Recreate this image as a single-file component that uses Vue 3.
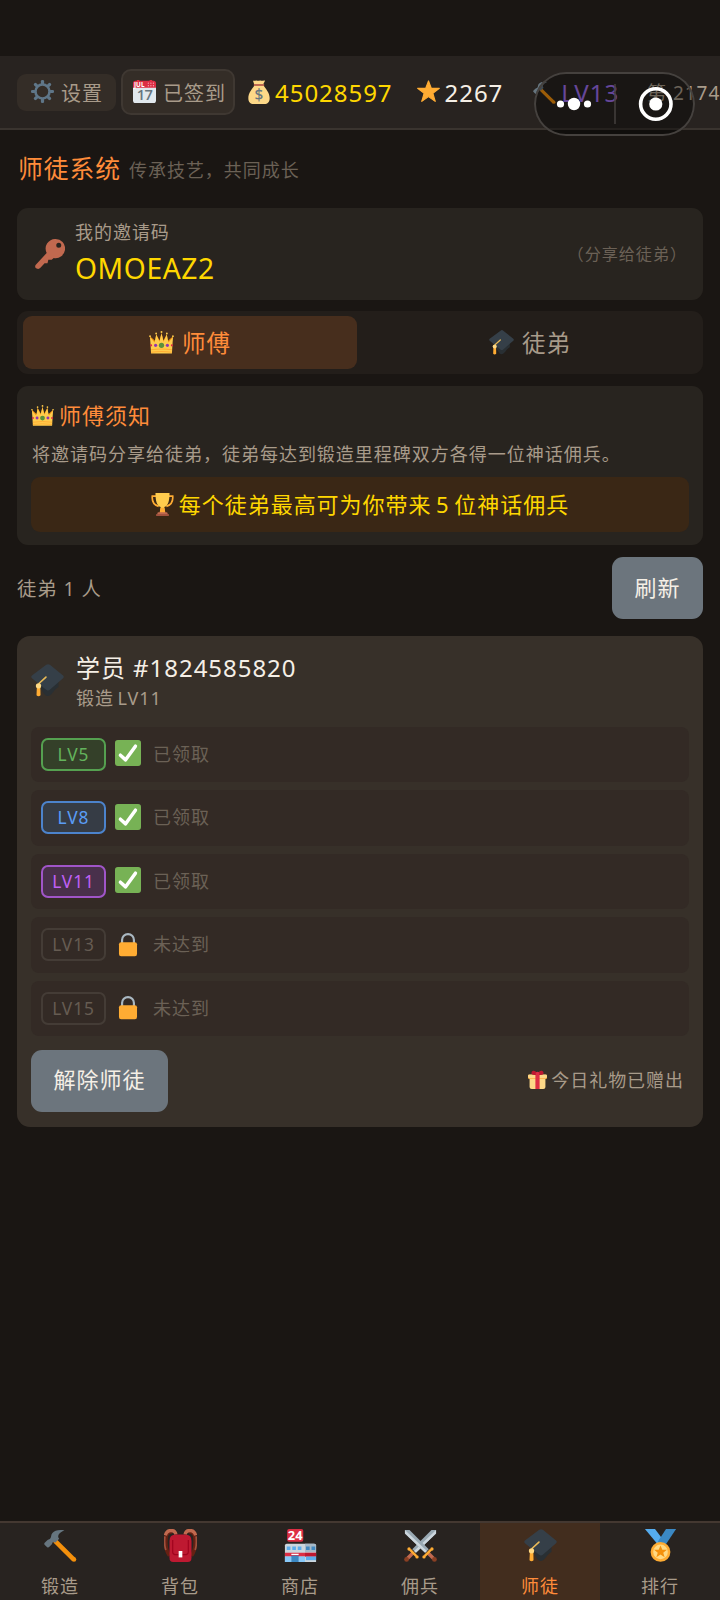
<script setup>
const levels = [
  { name: 'LV5', tone: 'green', done: true },
  { name: 'LV8', tone: 'blue', done: true },
  { name: 'LV11', tone: 'purple', done: true },
  { name: 'LV13', tone: 'locked', done: false },
  { name: 'LV15', tone: 'locked', done: false },
]
const nav = [
  { icon: 'hammer', label: '锻造' },
  { icon: 'bag', label: '背包' },
  { icon: 'store', label: '商店' },
  { icon: 'swords', label: '佣兵' },
  { icon: 'cap', label: '师徒', active: true },
  { icon: 'medal', label: '排行' },
]
const teeth = [0, 45, 90, 135, 180, 225, 270, 315]
</script>

<template>
  <div class="app">
    <svg class="defs" aria-hidden="true">
      <symbol id="gear" viewBox="0 0 36 36">
        <circle cx="18" cy="18" r="11" fill="none" stroke="#5f7688" stroke-width="4" />
        <rect v-for="a in teeth" :key="a" x="15.5" y="0" width="5" height="7" rx="2" fill="#5f7688" :transform="`rotate(${a} 18 18)`" />
      </symbol>
      <symbol id="calendar" viewBox="0 0 36 36">
        <path d="M0 10h36v22a4 4 0 0 1-4 4H4a4 4 0 0 1-4-4z" fill="#e1e8ed" />
        <path d="M0 12V5a4 4 0 0 1 4-4h2a2 2 0 0 1 4 0h16a2 2 0 0 1 4 0h2a4 4 0 0 1 4 4v7z" fill="#dd2e44" />
        <g fill="#f4abba"><circle cx="24" cy="5" r="1" /><circle cx="28" cy="5" r="1" /><circle cx="32" cy="5" r="1" /><circle cx="24" cy="9" r="1" /><circle cx="28" cy="9" r="1" /><circle cx="32" cy="9" r="1" /></g>
        <text x="1.5" y="11" class="cal-month">JUL</text>
        <text x="18" y="32" class="cal-day">17</text>
      </symbol>
      <symbol id="money" viewBox="0 0 36 36">
        <path d="M12 7C8 13 2 19 2 27c0 6 3 9 8 9h16c5 0 8-3 8-9 0-8-6-14-10-20z" fill="#fdd888" />
        <path d="M11 7 9 1c3 1 4-1 6 0s4-1 6 0 4-1 6 0l-3 6z" fill="#fdd888" />
        <rect x="10" y="6" width="16" height="3" rx="1.5" fill="#bf6952" />
        <text x="18" y="30" class="dollar">$</text>
      </symbol>
      <symbol id="star" viewBox="0 0 36 36">
        <path d="M18 1.5 22.3 13H35L24.8 20.7 28.5 33.5 18 26 7.5 33.5 11.2 20.7 1 13h12.7z" fill="#ffac33" stroke="#ffac33" stroke-width="1.8" stroke-linejoin="round" />
      </symbol>
      <symbol id="hammer" viewBox="0 0 36 36">
        <path d="M12 13 32.6 33.3" stroke="#f4900c" stroke-width="5" />
        <circle cx="32.7" cy="33.2" r="2.5" fill="#f4900c" />
        <path d="M22.3 1.4C16 .3 11.5 1.6 9.2 4.3c-2 2.4-.9 4.6-2.6 6.4-1 1-2 .7-3 1.6L.8 15c-.8.8-.6 1.7.1 2.4l2.3 2.2c.8.8 1.7.8 2.4.1l2.7-2.7c1-1 .5-1.8 1.3-2.6.8-.7 1.8-.1 2.6.7l4.4-4.4c-2.7-3.1-.2-6.8 5.7-9.3z" fill="#66757f" />
      </symbol>
      <symbol id="key" viewBox="0 0 36 36">
        <path fill-rule="evenodd" d="M24.5 0a11.5 11.5 0 1 1-2 22.8L20 25h-4l-1 4h-3.5l-5 5.5c-1 1.3-2.7 1.8-4.4 1C0 34.8-.4 32.3 1 30.8l13-14A11.5 11.5 0 0 1 24.5 0zm4 4.500a3 3 0 1 0 0 6 3 3 0 0 0 0-6z" fill="#c1694f" />
      </symbol>
      <symbol id="crown" viewBox="0 0 36 36">
        <path d="M3.5 21 1.500 9 9 16 10.300 6l5 9L18 4l2.700 11 5-9L27 16l7.500-7-2 12z" fill="#f4900c" />
        <path d="m3 34-1.500-24L8 18l2.500-11.500L15 17l3-12 3 12 4.500-10.500L28 18l6.500-8L33 34z" fill="#ffcc4d" />
        <g fill="#ffcc4d"><circle cx="1.500" cy="9" r="1.300" /><circle cx="10.300" cy="5" r="1.300" /><circle cx="18" cy="3" r="1.400" /><circle cx="25.700" cy="5" r="1.300" /><circle cx="34.500" cy="9" r="1.300" /></g>
        <path d="M3 28.500q15-2 30 0M3 32q15-2 30 0" stroke="#ffac33" stroke-width="1.500" fill="none" />
        <circle cx="18" cy="22" r="3.800" fill="#5c913b" /><circle cx="9.500" cy="22" r="2.300" fill="#9236b0" /><circle cx="26.500" cy="22" r="2.300" fill="#9236b0" /><circle cx="3" cy="22" r="1.600" fill="#dd2e44" /><circle cx="33" cy="22" r="1.600" fill="#dd2e44" />
      </symbol>
      <symbol id="trophy" viewBox="0 0 36 36">
        <path d="M9 5H2c-.8 9 3 14 10 16M27 5h7c.8 9-3 14-10 16" fill="none" stroke="#ffac33" stroke-width="2.600" />
        <path d="M7 0h22c0 12-2 20-8.200 22L22 31h-8l1.200-9C9 20 7 12 7 0z" fill="#ffcc4d" />
        <path d="M15 23h6l1.500 8h-9z" fill="#ffac33" />
        <path d="M10 36v-4q0-2 2-2h12q2 0 2 2v4z" fill="#c1694f" /><path d="M8 33h20v3H8z" fill="#a0513d" />
      </symbol>
      <symbol id="cap" viewBox="0 0 36 36">
        <path d="M8 17v7c4 2 6 11 10 11 5 0 7-8 12-10v-8z" fill="#292f33" />
        <path d="M20.600.9 35 12.500q1.500 1.500 0 3L20.500 28q-2 1.600-4 0L1 15.500q-1.500-1.500 0-3L16.600.9q2-1.500 4 0z" fill="#353f48" />
        <path d="M16.300 14.300 9 21v5" fill="none" stroke="#e9ba58" stroke-width="1.800" stroke-linecap="round" />
        <path d="M6 34.200 6.400 25h3.800l.2 9.200q-2.200 2-4.400 0z" fill="#ffac33" /><circle cx="8.200" cy="23.800" r="2.900" fill="#ffd983" />
      </symbol>
      <symbol id="check" viewBox="0 0 36 36">
        <rect width="36" height="36" rx="4" fill="#77b255" />
        <path d="m7.500 21 7.200 6.500L28.300 8.500" fill="none" stroke="#fff" stroke-width="4.800" stroke-linecap="round" stroke-linejoin="round" />
      </symbol>
      <symbol id="lock" viewBox="0 0 36 36">
        <path d="M9.800 19v-6.500a8.200 8.200 0 0 1 16.400 0V19" fill="none" stroke="#aab8c2" stroke-width="3" />
        <rect x="5.500" y="15.500" width="25" height="19.500" rx="3" fill="#ffac33" />
      </symbol>
      <symbol id="gift" viewBox="0 0 36 36">
        <path d="M3 12h30v20q0 4-4 4H7q-4 0-4-4z" fill="#fdd888" /><rect y="9" width="36" height="8" rx="2.500" fill="#fcab40" /><rect y="8.500" width="36" height="7" rx="2.500" fill="#fdd888" />
        <path d="M14 8h8v28h-8z" fill="#dd2e44" />
        <path d="M17 9C8 11 5 8 7 4s7-4 11 3c4-7 9-7 11-3s-1 7-10 5z" fill="#be1931" /><circle cx="18" cy="7" r="3.600" fill="#dd2e44" />
      </symbol>
      <symbol id="bag" viewBox="0 0 36 36">
        <path d="M9 3C2 3 2 8 2 15c0 6 1 10 4 14M27 3c7 0 7 5 7 12 0 6-1 10-4 14" fill="none" stroke="#662113" stroke-width="4" />
        <path d="M13 6C12 0 3 0 1.500 7M23 6c1-6 10-6 11.500 1" fill="none" stroke="#c1694f" stroke-width="3.600" /><path d="M1 8q-1 9 1 15M35 8q1 9-1 15" stroke="#a0513d" stroke-width="1.800" fill="none" />
        <path d="M6 13q0-7 7-7h10q7 0 7 7v18q0 5-4 5H10q-4 0-4-5z" fill="#be1931" />
        <path d="M9.500 12v13q0 3 4 3h9q4 0 4-3V12" fill="none" stroke="#a0041e" stroke-width="1.300" />
        <rect x="16" y="24" width="4" height="7" fill="#fff" />
      </symbol>
      <symbol id="store" viewBox="0 0 36 36">
        <path d="M1 18q0-2 2-2h30q2 0 2 2v18H1z" fill="#ccd6dd" /><path d="M23 16h10q2 0 2 2v7H23z" fill="#a7b9c7" />
        <g fill="#5dadec"><path d="M3 19h4v4H3zM9 19h4v4H9zM15 19h4v4h-4z" /><path d="M24 19h4v4h-4zM30 19h4v4h-4z" fill="#4289c1" /></g>
        <path d="M1 26h34v4H1z" fill="#dd2e44" /><path d="M23 26h12v4H23z" fill="#be1931" />
        <path d="M1 30h7v6H1zM16 30h7v6h-7z" fill="#88c9f9" /><path d="M8 29h8v7H8z" fill="#3b88c3" /><path d="M24 30h11v4H24z" fill="#5dadec" /><path d="M8 27h8v1.400H8z" fill="#fff" />
        <rect x="3.500" width="17.500" height="14" rx="2" fill="#dd2e44" /><text x="12.200" y="12" class="shop">24</text>
      </symbol>
      <symbol id="blade" viewBox="0 0 36 36">
        <path d="M1 1h5l21 21-4 4L1 5z" fill="#9aaab4" /><path d="M1 1v4l22 21 2-2z" fill="#ccd6dd" />
        <path d="m26 26 6.500 6.500" stroke="#c1694f" stroke-width="3.800" /><circle cx="33.200" cy="33.200" r="2.600" fill="#8a3f23" />
        <path d="m22.500 29.500 7-7" stroke="#ffac33" stroke-width="2.600" /><circle cx="21.800" cy="30.500" r="1.800" fill="#ffac33" /><circle cx="30.500" cy="21.800" r="1.800" fill="#ffac33" />
      </symbol>
      <symbol id="swords" viewBox="0 0 36 36">
        <use href="#blade" width="36" height="36" transform="matrix(-1 0 0 1 36 0)" /><use href="#blade" width="36" height="36" />
      </symbol>
      <symbol id="medal" viewBox="0 0 36 36">
        <path d="M1 0h11l12 16-8 2z" fill="#55acee" /><path d="M24 0h11L23 18l-8-4z" fill="#3b88c3" />
        <circle cx="18" cy="25" r="10.800" fill="#ffac33" /><circle cx="18" cy="25" r="8" fill="#ffd983" />
        <path d="m18 18 2 4.700h5l-4 3.200 1.500 5-4.500-3-4.500 3 1.500-5-4-3.200h5z" fill="#f4900c" />
      </symbol>
    </svg>

    <header class="topbar">
      <div class="pill settings"><svg class="i23"><use href="#gear" /></svg><span>设置</span></div>
      <div class="pill signed"><svg class="i23"><use href="#calendar" /></svg><span>已签到</span></div>
      <div class="stat gold"><svg class="i24"><use href="#money" /></svg><span>45028597</span></div>
      <div class="stat fame"><svg class="i23"><use href="#star" /></svg><span>2267</span></div>
      <div class="stat forge"><svg class="i23"><use href="#hammer" /></svg><span>LV13</span></div>
      <div class="rank">第 2174</div>
    </header>

    <div class="capsule">
      <svg width="161" height="64" viewBox="0 0 161 64">
        <g fill="#fff"><circle cx="26.500" cy="32" r="3.600" /><circle cx="40" cy="32" r="6.200" /><circle cx="53.500" cy="32" r="3.600" /><circle cx="121.800" cy="32" r="6.600" /></g>
        <path d="M81 12v40" stroke="#45413e" stroke-width="1.500" />
        <circle cx="121.800" cy="32" r="15.200" fill="none" stroke="#fff" stroke-width="3.600" />
      </svg>
    </div>

    <main>
      <div class="heading"><h1>师徒系统</h1><span>传承技艺，共同成长</span></div>

      <section class="invite">
        <svg class="i30"><use href="#key" /></svg>
        <div class="invite-main"><div class="label">我的邀请码</div><div class="code">OMOEAZ2</div></div>
        <span class="hint">（分享给徒弟）</span>
      </section>

      <div class="tabs">
        <div class="tab on"><svg class="i25"><use href="#crown" /></svg><span>师傅</span></div>
        <div class="tab"><svg class="i25"><use href="#cap" /></svg><span>徒弟</span></div>
      </div>

      <section class="notice">
        <div class="notice-title"><svg class="i23"><use href="#crown" /></svg><span>师傅须知</span></div>
        <p>将邀请码分享给徒弟，徒弟每达到锻造里程碑双方各得一位神话佣兵。</p>
        <div class="banner"><svg class="i23"><use href="#trophy" /></svg><span>每个徒弟最高可为你带来 5 位神话佣兵</span></div>
      </section>

      <div class="list-head"><span>徒弟 1 人</span><button>刷新</button></div>

      <section class="student">
        <div class="who">
          <svg class="i34"><use href="#cap" /></svg>
          <div><div class="name">学员 #1824585820</div><div class="sub">锻造 LV11</div></div>
        </div>
        <div class="levels">
          <div v-for="l in levels" :key="l.name" class="level">
            <span class="badge" :class="l.tone">{{ l.name }}</span>
            <svg class="mark"><use :href="l.done ? '#check' : '#lock'" /></svg>
            <span class="state">{{ l.done ? '已领取' : '未达到' }}</span>
          </div>
        </div>
        <div class="actions">
          <button>解除师徒</button>
          <div class="gift"><svg class="i19"><use href="#gift" /></svg><span>今日礼物已赠出</span></div>
        </div>
      </section>
    </main>

    <nav>
      <div v-for="n in nav" :key="n.label" class="nav-item" :class="{ active: n.active }">
        <svg class="i34"><use :href="'#' + n.icon" /></svg><span>{{ n.label }}</span>
      </div>
    </nav>
  </div>
</template>

<style>
body { background: #1a1613; }
</style>

<style scoped>
* { box-sizing: border-box; }
.app {
  position: relative; width: 720px; height: 1600px; padding-top: 56px; overflow: hidden;
  display: flex; flex-direction: column; background: #1a1613; color: #a89b8a;
  font-family: "Noto Sans", "Noto Sans CJK SC", sans-serif; font-size: 18px; letter-spacing: .96px; white-space: nowrap;
}
svg { display: block; flex: none; }
.defs { position: absolute; width: 0; height: 0; }
.cal-month { font: 700 10px "Noto Sans", sans-serif; fill: #fff; letter-spacing: 0; }
.cal-day { font: 600 23px "Open Sans", sans-serif; fill: #66757f; text-anchor: middle; letter-spacing: -1px; }
.dollar { font: 500 23px "Noto Sans", sans-serif; fill: #67757f; text-anchor: middle; letter-spacing: 0; }
.shop { font: 700 14px "Noto Sans", sans-serif; fill: #fff; text-anchor: middle; letter-spacing: 0; }
.i19 { width: 19px; height: 19px; } .i23 { width: 23px; height: 23px; } .i24 { width: 24px; height: 24px; }
.i25 { width: 25px; height: 25px; } .i30 { width: 30px; height: 30px; } .i34 { width: 33px; height: 33px; }

.topbar { height: 74px; flex: none; display: flex; align-items: center; padding-left: 17px; background: #282320; border-bottom: 2px solid #3a342f; overflow: hidden; }
.topbar > * { flex: none; }
.pill { display: flex; align-items: center; background: #342d27; font-size: 20px; }
.pill svg { margin-top: -2px; }
.settings { width: 99px; height: 37px; border-radius: 9px; padding-left: 14px; gap: 7px; }
.signed { width: 114px; height: 46px; border-radius: 10px; margin-left: 5px; padding-left: 10px; gap: 7px; border: 2px solid #3f3832; }
.stat { display: flex; align-items: center; gap: 4px; font-size: 24px; }
.fame svg { margin-top: -2px; }
.gold { margin-left: 12px; color: #ffd700; }
.fame { margin-left: 24px; gap: 5px; color: #f5efe6; }
.forge { margin-left: 30px; gap: 5px; color: #a070f0; }
.rank { margin-left: 28px; font-size: 19px; }

.capsule { position: absolute; left: 534px; top: 72px; width: 161px; height: 64px; border-radius: 32px; background: rgba(0, 0, 0, .36); box-shadow: inset 0 0 0 2px #45413e; }

main { padding: 0 17px; }
.heading { height: 78px; display: flex; align-items: center; gap: 8px; padding-left: 1px; color: #6b6156; }
h1 { margin: -4px 0 0; font-size: 24.800px; font-weight: 400; color: #ff8c3a; }
.invite { height: 92px; border-radius: 11px; background: #28241f; display: flex; align-items: center; padding: 0 16px 0 18px; }
.invite-main { margin: -3px 0 0 10px; flex: 1; }
.label { line-height: 30px; }
.code { font-size: 28.200px; line-height: 42px; letter-spacing: .6px; color: #ffd700; }
.hint { margin-top: -2px; font-size: 16.100px; color: #6b6156; }
.tabs { margin-top: 11px; height: 63px; padding: 5px 6px; border-radius: 11px; background: #231e1a; display: flex; gap: 6px; }
.tab { flex: 1; display: flex; align-items: center; justify-content: center; gap: 8px; font-size: 23.500px; border-radius: 9px; }
.tab span { margin-top: -2px; }
.tab.on { background: #472e1d; color: #ff8c3a; }
.notice { margin-top: 12px; height: 159px; padding: 13px 14px; border-radius: 11px; background: #28241f; }
.notice-title { height: 33px; display: flex; align-items: center; gap: 5px; font-size: 22px; color: #ff8c3a; }
.notice-title span, .banner span { margin-top: -4px; }
.notice p { margin: 0; padding-left: 1px; font-size: 18.040px; line-height: 45px; }
.banner { height: 55px; border-radius: 9px; background: #3a2715; color: #ffd700; font-size: 22px; word-spacing: -2px; display: flex; align-items: center; justify-content: center; gap: 5px; }
.list-head { margin-top: 12px; height: 62px; display: flex; align-items: center; justify-content: space-between; font-size: 19.300px; }
.list-head > span { margin-top: -1px; }
button { height: 62px; border: 0; border-radius: 11px; padding: 0 22.500px 5px; background: #6c757d; color: #f5efe6; font-family: inherit; font-size: 22px; letter-spacing: inherit; }
.student { margin-top: 17px; height: 491px; padding: 14px; border-radius: 13px; background: #373029; }
.who { height: 76.500px; display: flex; align-items: flex-start; gap: 12px; }
.who svg { margin-top: 14px; }
.name { font-size: 24px; line-height: 36px; color: #f5efe6; }
.sub { line-height: 24px; word-spacing: -2px; }
.levels { display: flex; flex-direction: column; gap: 8px; }
.level { height: 55.500px; border-radius: 8px; background: #332a25; display: flex; align-items: center; padding-left: 10px; }
.badge { width: 65px; height: 33px; line-height: 29px; border: 2px solid; border-radius: 7px; text-align: center; font-size: 17.300px; }
.green { color: #63b35c; background: #344029; border-color: #55a050; }
.blue { color: #5a9cf5; background: #363c45; border-color: #4c83cc; }
.purple { color: #c060f5; background: #49304b; border-color: #a055c8; }
.locked { color: #665c52; border-color: #443c36; }
.mark { width: 26px; height: 26px; margin: -2px 0 0 9px; }
.state { margin: -3px 0 0 12px; color: #6b6156; }
.actions { margin-top: 13.500px; display: flex; justify-content: space-between; align-items: center; }
.gift { display: flex; align-items: center; gap: 4px; padding-right: 5px; margin-top: -2px; }
.gift span { margin-top: -1px; }

nav { margin-top: auto; height: 79px; flex: none; display: grid; grid-template-columns: repeat(6, 1fr); background: #282320; border-top: 2px solid #443831; }
.nav-item { display: flex; flex-direction: column; align-items: center; padding-top: 6px; }
.nav-item span { margin-top: 11px; line-height: 26px; }
.nav-item.active { background: #422d1e; color: #ff8c3a; }
</style>
